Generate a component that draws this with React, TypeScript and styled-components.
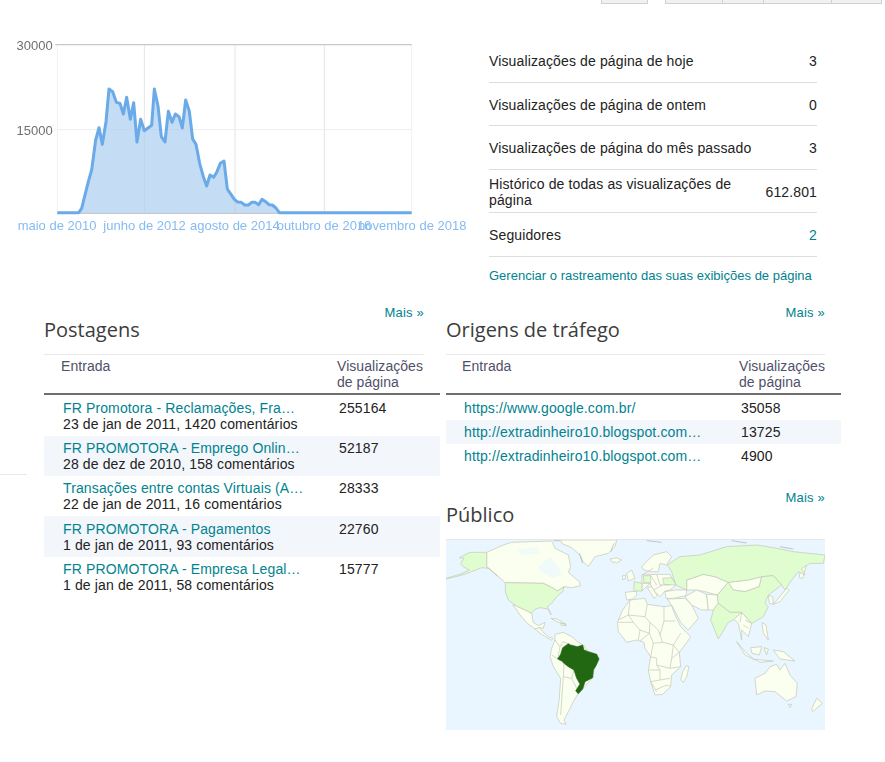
import React from "react";
import styled, { createGlobalStyle } from "styled-components";

const GlobalStyle = createGlobalStyle`
  html, body {
    margin: 0;
    padding: 0;
    background: #fff;
  }
  body {
    font-family: "Liberation Sans", Arial, sans-serif;
    font-size: 14px;
    letter-spacing: 0.13px;
    color: #222;
  }
`;

const linePoints =
  "172,638 236,638 245,625 265,545 275,510 287,420 297,383 307,433 318,365 327,267 338,275 349,307 360,310 370,342 380,292 391,358 401,308 411,426 422,358 433,392 455,376 463,267 474,318 484,410 495,426 505,334 516,367 526,342 537,350 547,384 557,300 568,334 578,417 588,433 599,490 610,530 620,558 630,525 641,532 651,515 661,490 672,483 682,567 693,583 703,598 713,606 724,607 734,615 745,615 755,607 765,607 776,614 786,598 797,605 807,614 817,615 828,624 838,638 1235,638";

const TrafficChart = () => (
  <ChartSvg viewBox="0 0 1410 720" width={470} height={240}>
    <g stroke="#e4e4e4" strokeWidth="3" fill="none">
      <line x1="433" y1="135" x2="433" y2="640" />
      <line x1="705" y1="135" x2="705" y2="640" />
      <line x1="973" y1="135" x2="973" y2="640" />
      <line x1="1235" y1="135" x2="1235" y2="640" stroke="#f1f1f1" />
      <line x1="172" y1="135" x2="172" y2="640" stroke="#f1f1f1" />
      <line x1="172" y1="389" x2="1235" y2="389" stroke="#eeeeee" />
    </g>
    <line x1="166" y1="134" x2="1235" y2="134" stroke="#c8c8c8" strokeWidth="4" />
    <line x1="172" y1="640" x2="1235" y2="640" stroke="#bdbdbd" strokeWidth="3" />
    <polygon points={`${linePoints} 1235,640 172,640`} fill="#a9cbf0" fillOpacity="0.68" />
    <polyline points={linePoints} fill="none" stroke="#6aaae8" strokeWidth="9" strokeLinejoin="round" />
    <AxisText x="158" y="150" textAnchor="end">30000</AxisText>
    <AxisText x="158" y="405" textAnchor="end">15000</AxisText>
    <DateText x="53" y="690">maio de 2010</DateText>
    <DateText x="310" y="690">junho de 2012</DateText>
    <DateText x="570" y="690">agosto de 2014</DateText>
    <DateText x="830" y="690">outubro de 2016</DateText>
    <DateText x="1074" y="690">novembro de 2018</DateText>
  </ChartSvg>
);

const land = "#fbffef";
const tint = "#e0fdd0";
const water = "#e9f6ff";

const plainCountries = [
  // Canada
  "M140,52 L190,30 L215,22 L335,18 L345,40 L385,60 L392,95 L385,112 L418,140 L422,152 L395,158 L372,155 L352,168 L340,160 L310,145 L196,143 L172,122 L140,95 Z",
  // Greenland
  "M362,15 L530,15 L525,35 L505,55 L465,65 L445,95 L430,80 L420,60 L395,38 L365,25 Z",
  // Iceland
  "M510,72 L530,68 L545,75 L530,83 L515,80 Z",
  // Mexico
  "M218,210 L228,212 L262,228 L275,235 L280,262 L295,272 L315,262 L310,280 L300,278 L285,282 L262,265 L240,240 L228,222 Z",
  // Central America
  "M285,282 L300,278 L308,290 L325,305 L338,310 L335,316 L318,306 L300,295 Z",
  // Caribbean
  "M333,250 L352,252 L378,268 L355,262 Z M362,265 L378,268 L378,272 L364,271 Z",
  // South America
  "M345,298 L370,292 L395,305 L415,322 L430,330 L445,350 L470,358 L458,428 L428,462 L418,470 L400,500 L385,530 L372,555 L378,568 L362,565 L350,545 L358,490 L362,430 L340,395 L330,365 L335,340 L345,315 Z",
  // Africa
  "M570,195 L615,190 L622,208 L672,215 L695,212 L705,240 L722,275 L752,305 L742,320 L718,352 L722,395 L695,420 L692,455 L668,478 L645,480 L632,440 L625,405 L632,365 L615,340 L612,322 L590,315 L560,322 L535,290 L532,262 L548,225 Z",
  // Madagascar
  "M738,392 L747,395 L740,425 L730,442 L722,435 L728,410 Z",
  // Spain and Portugal
  "M556,172 L590,168 L590,180 L578,192 L560,195 Z",
  // Britain, Ireland
  "M560,115 L575,105 L585,130 L565,138 Z M548,122 L556,120 L556,132 L548,134 Z",
  // Scandinavia
  "M605,95 L640,60 L680,50 L695,65 L680,90 L660,85 L655,110 L630,110 L612,105 Z",
  // Continental Europe
  "M606,120 L650,118 L690,118 L708,150 L690,165 L675,168 L660,185 L640,165 L630,145 L606,168 Z",
  // Italy
  "M622,158 L635,155 L652,182 L642,190 Z",
  // Turkey and Caucasus
  "M675,170 L705,165 L740,165 L738,182 L700,190 L678,190 Z",
  // Kazakhstan and Central Asia
  "M740,135 L790,118 L825,125 L865,142 L832,180 L795,170 L770,165 L740,165 Z",
  // Mongolia
  "M865,142 L925,135 L965,125 L958,155 L915,170 L880,165 Z",
  // Iran
  "M735,185 L770,165 L800,178 L805,225 L785,225 L755,210 Z",
  // Pakistan, Afghanistan
  "M800,178 L832,180 L835,205 L820,225 L805,225 Z",
  // Arabia
  "M682,192 L735,190 L755,210 L775,250 L745,285 L722,262 L698,215 Z",
  // South East Asia
  "M880,252 L905,232 L935,265 L925,305 L905,285 L905,315 L895,265 Z",
  // Indonesia
  "M890,320 L920,355 L945,375 L915,360 Z M932,338 L965,335 L958,360 L936,355 Z M945,373 L1000,378 L960,382 Z M972,338 L985,342 L980,360 Z",
  // Philippines
  "M966,262 L978,270 L985,315 L970,295 Z",
  // New Guinea
  "M1000,345 L1030,350 L1065,378 L1020,372 Z",
  // Korea
  "M985,180 L998,185 L1000,208 L988,205 Z",
  // Japan, Sakhalin
  "M1040,160 L1048,165 L1020,200 L1000,208 Z M1082,95 L1100,88 L1088,130 L1078,128 Z",
  // Australia
  "M945,430 L975,415 L990,395 L1010,388 L1020,405 L1035,385 L1050,420 L1072,445 L1068,485 L1040,498 L1005,470 L975,468 L950,480 Z",
  // Tasmania, New Zealand
  "M1045,508 L1056,508 L1050,518 Z M1130,490 L1147,505 L1118,530 L1115,522 Z",
];

const tintedCountries = [
  // Alaska
  "M18,130 L60,118 L88,105 L70,95 L62,85 L72,70 L58,68 L90,52 L140,52 L140,95 L172,122 L165,118 L148,100 L125,98 L95,110 L60,122 L18,132 Z",
  // United States
  "M196,143 L310,145 L340,160 L352,168 L372,155 L368,170 L350,185 L335,205 L322,215 L330,235 L335,240 L325,222 L300,218 L285,222 L275,235 L262,228 L228,212 L205,195 L196,170 Z",
  // France, Germany, Ukraine
  "M582,140 L606,145 L606,168 L582,168 Z M610,122 L632,122 L632,144 L612,144 Z M668,130 L695,128 L708,150 L672,148 Z",
  // Russia
  "M682,90 L720,65 L780,60 L860,35 L950,30 L1000,38 L1060,50 L1155,60 L1150,85 L1110,85 L1085,100 L1095,120 L1075,110 L1055,135 L1035,165 L1025,150 L1000,122 L965,125 L925,135 L865,142 L825,125 L790,118 L740,135 L740,165 L708,150 L695,110 Z",
  // China
  "M832,180 L865,142 L880,165 L915,170 L958,155 L965,125 L1000,122 L1025,150 L985,180 L975,205 L985,215 L970,245 L935,265 L905,232 L870,232 L835,205 Z",
  // India
  "M820,225 L835,205 L870,232 L905,232 L880,255 L865,262 L835,312 L812,255 Z",
];

const borders =
  "M345,315 L360,335 L353,372 M385,326 L370,320 L360,335 M335,360 L353,372 M372,385 L370,425 L395,430 L402,405 M370,425 L362,540 M395,430 L415,470 " +
  "M570,195 L565,240 L535,255 M622,208 L615,245 L630,262 M672,215 L672,258 M535,262 L580,262 L600,285 L595,315 M580,262 L565,240 L615,245 " +
  "M630,262 L628,295 L600,285 M672,258 L660,300 L668,322 M630,262 L655,285 L660,300 M672,258 L705,258 M668,322 L700,330 L722,295 M700,330 L718,352 " +
  "M600,318 L628,295 L640,325 M640,325 L668,322 M632,365 L650,370 L650,390 L690,400 L695,370 L700,330 M695,370 L718,352 M690,400 L722,395 " +
  "M625,405 L660,405 L660,435 L632,440 M632,440 L650,470 M660,435 L690,430 M645,465 L680,450 L692,455 M640,325 L632,365 M650,390 L660,405 " +
  "M606,120 L640,100 M632,122 L650,150 M650,118 L660,150 L690,150 M640,165 L668,150 M606,145 L632,144 " +
  "M905,232 L900,262 M915,255 L935,265 M925,280 L910,270";

const WorldMap = () => (
  <MapSvg viewBox="18 15 1137 570" width={379} height={190}>
    <rect x="18" y="15" width="1137" height="570" fill={water} />
    <g stroke="#c6cabb" strokeWidth="2.2" strokeLinejoin="round">
      {plainCountries.map((d) => (
        <path key={d} fill={land} d={d} />
      ))}
      {tintedCountries.map((d) => (
        <path key={d} fill={tint} d={d} />
      ))}
      <path fill="none" d={borders} />
    </g>
    {/* Hudson bay and the arctic channels */}
    <path fill={water} fillOpacity="0.6" d="M295,95 L330,65 L355,95 L365,120 L340,130 L300,110 Z M230,45 L290,35 L300,55 L250,60 Z" />
    {/* Arctic fragments */}
    <path fill="none" stroke="#a9ada6" strokeWidth="2" d="M340,17 L360,17 M620,17 L665,22 M875,17 L920,24 M418,55 L428,85 M522,25 L512,50 M1020,35 L1060,42" />
    <path fill="#226711" stroke="#226711" strokeWidth="2" strokeLinejoin="round" d="M385,326 L392,330 L412,335 L428,330 L432,345 L445,350 L470,358 L477,372 L468,392 L460,405 L458,428 L435,440 L428,462 L415,476 L407,468 L420,447 L410,430 L402,405 L385,395 L372,385 L365,378 L353,372 L362,358 L368,338 Z" />
  </MapSvg>
);

type PostRow = { title: string; meta: string; views: string };

const posts: PostRow[] = [
  { title: "FR Promotora - Reclamações, Fra…", meta: "23 de jan de 2011, 1420 comentários", views: "255164" },
  { title: "FR PROMOTORA - Emprego Onlin…", meta: "28 de dez de 2010, 158 comentários", views: "52187" },
  { title: "Transações entre contas Virtuais (A…", meta: "22 de jan de 2011, 16 comentários", views: "28333" },
  { title: "FR PROMOTORA - Pagamentos", meta: "1 de jan de 2011, 93 comentários", views: "22760" },
  { title: "FR PROMOTORA - Empresa Legal…", meta: "1 de jan de 2011, 58 comentários", views: "15777" },
];

const sources = [
  { url: "https://www.google.com.br/", views: "35058" },
  { url: "http://extradinheiro10.blogspot.com…", views: "13725" },
  { url: "http://extradinheiro10.blogspot.com…", views: "4900" },
];

const stats = [
  { label: "Visualizações de página de hoje", value: "3" },
  { label: "Visualizações de página de ontem", value: "0" },
  { label: "Visualizações de página do mês passado", value: "3" },
  { label: "Histórico de todas as visualizações de página", value: "612.801" },
];

const App = () => {
  return (
    <Page>
      <GlobalStyle />
      <TabBar>
        <Tab $width={47} />
        <TabGap />
        <Tab $width={58} />
        <Tab $width={42} />
        <Tab $width={69} />
        <Tab $width={51} />
      </TabBar>
      <TopRow>
        <TrafficChart />
        <StatsPanel>
          {stats.map((s) => (
            <StatRow key={s.label}>
              <StatLabel>{s.label}</StatLabel>
              <span>{s.value}</span>
            </StatRow>
          ))}
          <StatRow>
            <StatLabel>Seguidores</StatLabel>
            <TealText>2</TealText>
          </StatRow>
          <ManageLink>Gerenciar o rastreamento das suas exibições de página</ManageLink>
        </StatsPanel>
      </TopRow>
      <Columns>
        <Column>
          <MoreLink $width={380}>Mais »</MoreLink>
          <SectionTitle>Postagens</SectionTitle>
          <HeadRow $rule={380}>
            <HeadEntry $indent={17} $width={293}>Entrada</HeadEntry>
            <HeadViews>Visualizações de página</HeadViews>
          </HeadRow>
          <RowList>
            {posts.map((p, i) => (
              <PostItem key={p.title} $shaded={i % 2 === 1}>
                <PostText>
                  <TitleLink>{p.title}</TitleLink>
                  <div>{p.meta}</div>
                </PostText>
                <Views>{p.views}</Views>
              </PostItem>
            ))}
          </RowList>
          <StrayRule />
        </Column>
        <RightColumn>
          <MoreLink $width={379}>Mais »</MoreLink>
          <SectionTitle>Origens de tráfego</SectionTitle>
          <HeadRow $rule={379}>
            <HeadEntry $indent={16} $width={293}>Entrada</HeadEntry>
            <HeadViews>Visualizações de página</HeadViews>
          </HeadRow>
          <RowList>
            {sources.map((s, i) => (
              <SourceItem key={i} $shaded={i % 2 === 1}>
                <SourceText>
                  <TitleLink>{s.url}</TitleLink>
                </SourceText>
                <Views>{s.views}</Views>
              </SourceItem>
            ))}
          </RowList>
          <AudienceBlock>
            <MoreLink $width={379}>Mais »</MoreLink>
            <SectionTitle>Público</SectionTitle>
            <MapFrame>
              <WorldMap />
            </MapFrame>
          </AudienceBlock>
        </RightColumn>
      </Columns>
    </Page>
  );
};

const Page = styled.div`
  position: relative;
  width: 885px;
  height: 762px;
  overflow: hidden;
  background: #fff;
`;

const TabBar = styled.div`
  display: flex;
  height: 4px;
  padding-left: 602px;
`;

const Tab = styled.div<{ $width: number }>`
  box-sizing: border-box;
  width: ${(p) => p.$width}px;
  height: 4px;
  background: #f1f1f1;
  border: 1px solid #d0d0d0;
  border-top: 0;
  margin-left: -1px;
`;

const TabGap = styled.div`
  width: 18px;
`;

const TopRow = styled.div`
  display: flex;
  height: 289px;
  margin-top: -4px;
`;

const ChartSvg = styled.svg`
  display: block;
  flex: none;
  filter: blur(0.45px);
`;

const AxisText = styled.text`
  font-family: "Liberation Sans", Arial, sans-serif;
  font-size: 39px;
  letter-spacing: 0;
  fill: #6f6f6f;
`;

const DateText = styled.text`
  font-family: "Liberation Sans", Arial, sans-serif;
  font-size: 39px;
  letter-spacing: 0;
  fill: #85bbf0;
`;

const StatsPanel = styled.div`
  width: 328px;
  margin-left: 19px;
  padding-top: 39px;
`;

const StatRow = styled.div`
  box-sizing: border-box;
  display: flex;
  align-items: center;
  justify-content: space-between;
  height: 43.5px;
  padding-top: 1.5px;
  border-bottom: 1px solid #dddddd;
  line-height: 16px;
  color: #222;
`;

const StatLabel = styled.span`
  width: 270px;
`;

const TealText = styled.span`
  color: #00838f;
`;

const ManageLink = styled.div`
  margin-top: 11px;
  font-size: 13px;
  letter-spacing: 0.01px;
  line-height: 16px;
  white-space: nowrap;
  color: #00838f;
`;

const Columns = styled.div`
  display: flex;
  gap: 6px;
  padding-left: 44px;
`;

const Column = styled.div`
  position: relative;
  width: 396px;
`;

const RightColumn = styled(Column)`
  width: 395px;
`;

const MoreLink = styled.div<{ $width: number }>`
  width: ${(p) => p.$width}px;
  height: 16px;
  margin-top: 16px;
  font-size: 13px;
  line-height: 16px;
  letter-spacing: 0.2px;
  text-align: right;
  color: #00838f;
`;

const SectionTitle = styled.div`
  height: 38px;
  margin-top: -5px;
  font-family: "Open Sans", sans-serif;
  font-size: 20px;
  letter-spacing: 0;
  line-height: 27px;
  color: #3c3c3c;
`;

const HeadRow = styled.div<{ $rule: number }>`
  box-sizing: border-box;
  display: flex;
  height: 41px;
  width: 100%;
  border-bottom: 2px solid #6f6f6f;
  position: relative;
  line-height: 16px;
  letter-spacing: 0.05px;
  color: #50506a;
  &::before {
    content: "";
    position: absolute;
    top: 0;
    left: 0;
    width: ${(p) => p.$rule}px;
    height: 1px;
    background: #e8e8e8;
  }
`;

const HeadEntry = styled.div<{ $indent: number; $width: number }>`
  box-sizing: border-box;
  width: ${(p) => p.$width}px;
  padding: 4px 0 0 ${(p) => p.$indent}px;
`;

const HeadViews = styled.div`
  width: 90px;
  padding-top: 4px;
`;

const RowList = styled.div`
  padding-top: 0.7px;
`;

const PostItem = styled.div<{ $shaded: boolean }>`
  display: flex;
  box-sizing: border-box;
  height: 40.25px;
  padding: 4.2px 0 0 19px;
  line-height: 16px;
  color: #222;
  background: ${(p) => (p.$shaded ? "#f3f6fb" : "#fff")};
`;

const SourceItem = styled(PostItem)`
  height: 24px;
  padding: 4px 0 0 18px;
`;

const PostText = styled.div`
  width: 240px;
  margin-right: 36px;
  white-space: nowrap;
`;

const SourceText = styled(PostText)`
  margin-right: 37px;
`;

const TitleLink = styled.div`
  color: #00838f;
`;

const Views = styled.div`
  color: #222;
`;

const StrayRule = styled.div`
  position: absolute;
  left: -44px;
  top: 185px;
  width: 27px;
  height: 1px;
  background: #e8e8e8;
`;

const AudienceBlock = styled.div`
  padding-top: 6px;
`;

const MapFrame = styled.div`
  width: 379px;
  height: 190px;
  border-top: 1px solid #e8e8e8;
`;

const MapSvg = styled.svg`
  display: block;
  filter: blur(0.35px);
`;

export default App;
